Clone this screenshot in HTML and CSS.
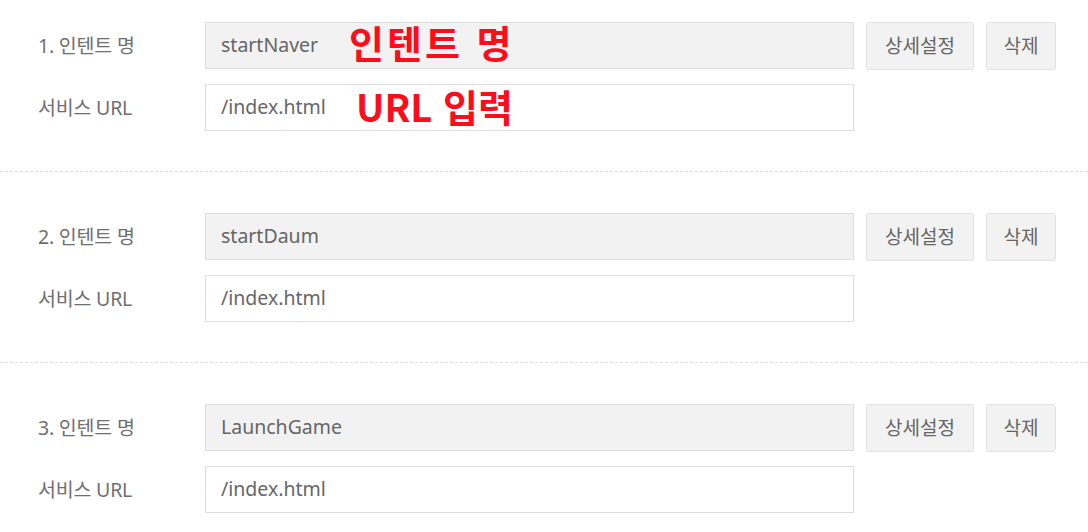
FILE: index.html
```html
<!DOCTYPE html>
<html lang="ko">
<head>
<meta charset="utf-8">
<link rel="stylesheet" href="styles.css">
</head>
<body>
<div class="list">
  <section class="intent first">
    <div class="row">
      <label class="label">1. 인텐트 명</label>
      <div class="field">
        <div class="input readonly">startNaver</div>
        <span class="note note-name">인텐트 명</span>
      </div>
      <button class="btn btn-wide">상세설정</button>
      <button class="btn btn-narrow">삭제</button>
    </div>
    <div class="row">
      <label class="label">서비스 URL</label>
      <div class="field">
        <div class="input">/index.html</div>
        <span class="note note-url">URL 입력</span>
      </div>
    </div>
  </section>
  <section class="intent">
    <div class="row">
      <label class="label">2. 인텐트 명</label>
      <div class="field">
        <div class="input readonly">startDaum</div>
      </div>
      <button class="btn btn-wide">상세설정</button>
      <button class="btn btn-narrow">삭제</button>
    </div>
    <div class="row">
      <label class="label">서비스 URL</label>
      <div class="field">
        <div class="input">/index.html</div>
      </div>
    </div>
  </section>
  <section class="intent last">
    <div class="row">
      <label class="label">3. 인텐트 명</label>
      <div class="field">
        <div class="input readonly">LaunchGame</div>
      </div>
      <button class="btn btn-wide">상세설정</button>
      <button class="btn btn-narrow">삭제</button>
    </div>
    <div class="row">
      <label class="label">서비스 URL</label>
      <div class="field">
        <div class="input">/index.html</div>
      </div>
    </div>
  </section>
</div>
</body>
</html>
```

FILE: styles.css
```css
html, body {
  margin: 0;
  padding: 0;
  background: #fff;
}
body {
  font-family: "Noto Sans", "Noto Sans CJK KR", sans-serif;
  color: #666;
}
.list {
  display: flex;
  flex-direction: column;
}
.intent {
  display: flex;
  flex-direction: column;
  gap: 15px;
  padding: 41px 0 40px 38px;
  border-bottom: 1px dashed #ddd;
}
.intent.first {
  padding-top: 22px;
}
.intent.last {
  border-bottom: none;
}
.row {
  display: flex;
  align-items: center;
  height: 47px;
}
.label {
  width: 167px;
  flex: none;
  font-size: 19.5px;
  color: #6f6f6f;
  letter-spacing: -0.2px;
  padding-bottom: 3px;
}
.field {
  position: relative;
  width: 649px;
  flex: none;
  height: 47px;
}
.input {
  box-sizing: border-box;
  height: 47px;
  width: 100%;
  border: 1px solid #dedede;
  background: #fff;
  padding: 0 15px 3px;
  display: flex;
  align-items: center;
  font-size: 19.5px;
  color: #666;
}
.input.readonly {
  background: #f2f2f2;
}
.note {
  position: absolute;
  top: 50%;
  transform: translateY(-50%);
  font-family: "Noto Sans CJK KR", "Noto Sans", sans-serif;
  font-weight: 700;
  font-size: 38px;
  color: #fc0d1b;
  white-space: nowrap;
}
.note-name {
  left: 144px;
  margin-top: -5px;
  letter-spacing: 3px;
}
.note-url {
  left: 151px;
  margin-top: -3px;
}
.btn {
  box-sizing: border-box;
  height: 48px;
  margin-left: 12px;
  border: 1px solid #e2e2e2;
  border-radius: 3px;
  background: #f2f2f2;
  font-family: "Noto Sans CJK KR", sans-serif;
  font-size: 19px;
  color: #666;
  padding: 0 0 3px;
}
.btn-wide {
  width: 108px;
}
.btn-narrow {
  width: 70px;
}
```
